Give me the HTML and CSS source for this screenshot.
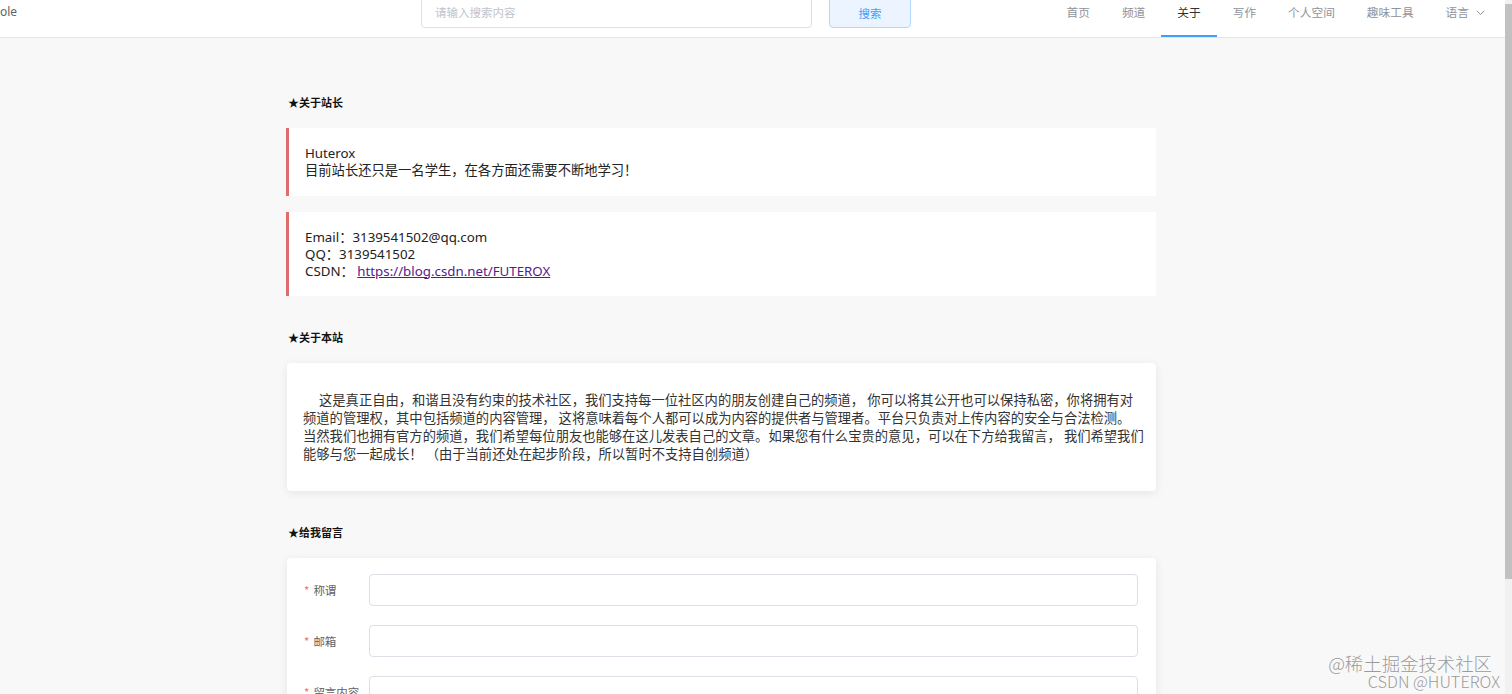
FILE: index.html
```html
<!DOCTYPE html>
<html lang="zh-CN">
<head>
<meta charset="utf-8">
<title>关于</title>
<link rel="stylesheet" href="styles.css">
</head>
<body>
<div class="app">
  <div class="viewport">
    <header class="topbar">
      <div class="brand">ole</div>
      <div class="search">
        <input class="search-input" type="text" placeholder="请输入搜索内容">
        <button class="search-btn" type="button">搜索</button>
      </div>
      <nav class="menu">
        <a class="menu-item">首页</a>
        <a class="menu-item">频道</a>
        <a class="menu-item active">关于</a>
        <a class="menu-item">写作</a>
        <a class="menu-item">个人空间</a>
        <a class="menu-item">趣味工具</a>
        <a class="menu-item submenu">语言
          <svg class="chev" width="9" height="6" viewBox="0 0 9 6"><path d="M0.8 0.8 L4.5 4.6 L8.2 0.8" fill="none" stroke="#909399" stroke-width="1"/></svg>
        </a>
      </nav>
    </header>

    <main class="content">
      <section class="section">
        <h3 class="section-title">★关于站长</h3>
        <div class="quote">
          <div>Huterox</div>
          <div>目前站长还只是一名学生，在各方面还需要不断地学习！</div>
        </div>
        <div class="quote">
          <div>Email：3139541502@qq.com</div>
          <div>QQ：3139541502</div>
          <div>CSDN： <a class="link" href="#">https://blog.csdn.net/FUTEROX</a></div>
        </div>
      </section>

      <section class="section">
        <h3 class="section-title">★关于本站</h3>
        <div class="card about">
          <p class="about-text">这是真正自由，和谐且没有约束的技术社区，我们支持每一位社区内的朋友创建自己的频道， 你可以将其公开也可以保持私密，你将拥有对<br>频道的管理权，其中包括频道的内容管理， 这将意味着每个人都可以成为内容的提供者与管理者。平台只负责对上传内容的安全与合法检测。<br>当然我们也拥有官方的频道，我们希望每位朋友也能够在这儿发表自己的文章。如果您有什么宝贵的意见，可以在下方给我留言， 我们希望我们<br>能够与您一起成长！ （由于当前还处在起步阶段，所以暂时不支持自创频道）</p>
        </div>
      </section>

      <section class="section">
        <h3 class="section-title">★给我留言</h3>
        <div class="card form">
          <div class="form-row">
            <label class="form-label"><span class="req">*</span>称谓</label>
            <input class="form-input" type="text">
          </div>
          <div class="form-row">
            <label class="form-label"><span class="req">*</span>邮箱</label>
            <input class="form-input" type="text">
          </div>
          <div class="form-row">
            <label class="form-label"><span class="req">*</span>留言内容</label>
            <textarea class="form-textarea"></textarea>
          </div>
        </div>
      </section>
    </main>
  </div>
  <div class="scrollbar"><div class="thumb"></div></div>
</div>
<div class="watermark">
  <div>@稀土掘金技术社区</div>
  <div class="wm-2">CSDN @HUTEROX</div>
</div>
</body>
</html>
```

FILE: styles.css
```css
* { box-sizing: border-box; }
html, body {
  margin: 0;
  padding: 0;
  height: 694px;
  overflow: hidden;
}
body {
  font-family: "Noto Sans", "Noto Sans CJK SC", sans-serif;
  background: #f8f8f8;
  color: #222;
  position: relative;
}
.app {
  display: flex;
  height: 694px;
}
.viewport {
  flex: 1;
  min-width: 0;
  height: 694px;
  overflow: hidden;
}

/* header */
.topbar {
  height: 38px;
  background: #fff;
  border-bottom: 1px solid #e6e6e6;
  display: flex;
  align-items: flex-start;
}
.brand {
  flex: 0 0 421px;
  font-size: 12px;
  line-height: 24px;
  color: #606266;
}
.search {
  display: flex;
  margin-top: -4px;
}
.search-input {
  width: 391px;
  height: 32px;
  border: 1px solid #dcdfe6;
  border-radius: 4px;
  padding: 0 13px;
  font-family: "Noto Sans CJK SC", sans-serif;
  font-size: 11.5px;
  color: #606266;
  outline: none;
  background: #fff;
}
.search-input::placeholder { color: #c0c4cc; }
.search-btn {
  margin-left: 17px;
  width: 82px;
  height: 32px;
  border: 1px solid #b3d8ff;
  background: #ecf5ff;
  color: #409eff;
  border-radius: 4px;
  font-family: "Noto Sans CJK SC", sans-serif;
  font-size: 11.5px;
  padding: 2px 0 0;
}
.menu {
  margin-left: auto;
  display: flex;
  height: 37px;
}
.menu-item {
  height: 37px;
  padding: 0 16px;
  font-family: "Noto Sans CJK SC", sans-serif;
  font-size: 11.7px;
  line-height: 24px;
  color: #909399;
  border-bottom: 2px solid transparent;
  display: flex;
  align-items: flex-start;
  white-space: nowrap;
}
.menu-item.active {
  color: #303133;
  border-bottom-color: #409eff;
}
.menu-item.submenu { padding-right: 20px; }
.chev { margin-left: 7px; margin-top: 10px; }

/* content */
.content {
  width: 870px;
  margin-left: 286px;
  padding-top: 54px;
}
.section { margin-bottom: 31px; }
.section-title {
  margin: 0 0 16px 2px;
  height: 20px;
  line-height: 20px;
  font-size: 11px;
  font-weight: 700;
  color: #111;
  font-family: "Noto Sans CJK SC", sans-serif;
}
.quote {
  background: #fff;
  border-left: 3px solid #e06c6c;
  padding: 17px 16px 16.5px 16px;
  font-size: 13.3px;
  line-height: 17px;
  color: #222;
}
.quote + .quote { margin-top: 16px; }
.link {
  color: #551a8b;
  text-decoration: underline;
}

.card {
  background: #fff;
  border-radius: 4px;
  box-shadow: 0 2px 10px 0 rgba(0, 0, 0, 0.08);
  margin-left: 1px;
}
.about { padding: 28px 16px; }
.about-text {
  margin: 0;
  font-family: "Noto Sans CJK SC", sans-serif;
  font-size: 13.3px;
  line-height: 18px;
  color: #333;
  text-indent: 16px;
  white-space: nowrap;
}

.form { padding: 16px 18px 0 17px; }
.form-row {
  display: flex;
  align-items: flex-start;
  margin-bottom: 19px;
}
.form-label {
  flex: 0 0 65px;
  line-height: 32px;
  font-family: "Noto Sans CJK SC", sans-serif;
  font-size: 11.5px;
  color: #606266;
  white-space: nowrap;
}
.req {
  color: #f56c6c;
  margin-right: 4px;
}
.form-input, .form-textarea {
  flex: 1;
  height: 32px;
  border: 1px solid #dcdfe6;
  border-radius: 4px;
  background: #fff;
  outline: none;
  font-size: 12px;
}
.form-textarea {
  height: 74px;
  resize: none;
}

/* scrollbar */
.scrollbar {
  flex: 0 0 7px;
  height: 694px;
  background: #f1f1f1;
  padding-top: 4px;
}
.thumb {
  height: 575px;
  background: #c1c1c1;
}

/* watermark overlay */
.watermark {
  position: absolute;
  right: 20px;
  bottom: 4px;
  text-align: right;
  font-family: "Noto Sans CJK SC", sans-serif;
  font-size: 18.4px;
  font-weight: 300;
  line-height: 17.5px;
  color: #9a9a9a;
  text-shadow: 0 0 1px #fff, 0 0 1px #fff;
}
.wm-2 {
  font-size: 16.3px;
  margin-right: -8px;
}
```
